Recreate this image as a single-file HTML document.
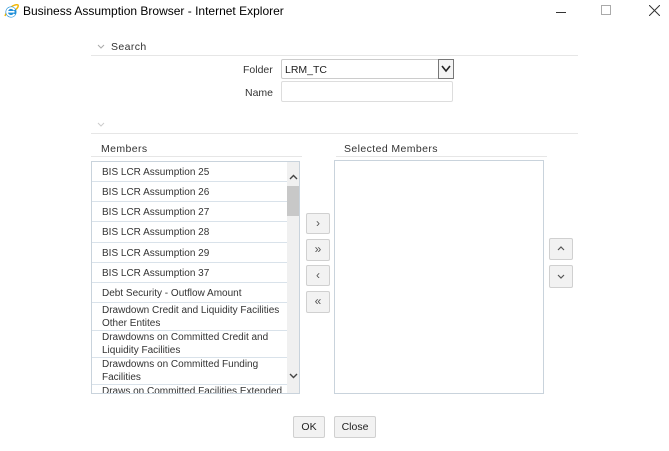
<!DOCTYPE html>
<html><head><meta charset="utf-8"><style>
*{margin:0;padding:0;box-sizing:border-box}
body{width:669px;height:451px;background:#fff;font-family:"Liberation Sans",sans-serif;font-size:11px;color:#333;position:relative;overflow:hidden}
.a{position:absolute}
.title{left:23px;top:4px;font-size:12px;color:#000}
.hr{height:1px;background:#e6e6e6}
.row{position:absolute;left:0;width:196px;border-bottom:1px solid #d9e2ea;padding-left:10px;font-size:10px;color:#333;line-height:13px;white-space:nowrap;overflow:hidden}
.btn{position:absolute;background:#f2f2f2;border:1px solid #d0d0d0;border-radius:2px;color:#555;text-align:center;font-size:12px}
</style></head><body>
<svg class="a" style="left:3px;top:3px" width="16" height="16" viewBox="0 0 16 16">
<path d="M2 13 C6 2 14 1 15 2 C16 4 13 7 9 9" fill="none" stroke="#f2b705" stroke-width="1.5"/>
<circle cx="8" cy="9" r="5.5" fill="#1e8fd9"/><rect x="4.5" y="8" width="7" height="1.6" fill="#fff"/>
<path d="M11.5 11 A4 4 0 1 1 11.5 7" fill="none" stroke="#fff" stroke-width="1.8"/>
</svg>
<div class="a title">Business Assumption Browser - Internet Explorer</div>
<div class="a" style="left:556px;top:12px;width:10px;height:1px;background:#333"></div>
<div class="a" style="left:601px;top:5px;width:10px;height:10px;border:1px solid #aaa"></div>
<svg class="a" style="left:649px;top:5px" width="11" height="11"><path d="M0 0L11 11M11 0L0 11" stroke="#333" stroke-width="1"/></svg>

<svg class="a" style="left:97px;top:44px" width="8" height="6"><path d="M1 1L4 4L7 1" fill="none" stroke="#aaa"/></svg>
<div class="a" style="left:111px;top:41px;font-size:10.5px;letter-spacing:.4px">Search</div>
<div class="a hr" style="left:91px;top:55px;width:487px"></div>
<div class="a" style="left:243px;top:64px;font-size:10.5px">Folder</div>
<div class="a" style="left:281px;top:59px;width:173px;height:20px;border:1px solid #ccc;border-radius:2px;padding:4px 0 0 3px;font-size:10.5px;color:#222">LRM_TC</div>
<div class="a" style="left:438px;top:59px;width:16px;height:20px;border:1px solid #777;background:#f4f4f4"></div>
<svg class="a" style="left:441px;top:65px" width="10" height="8"><path d="M1 1L5 6L9 1" fill="none" stroke="#222" stroke-width="1.6"/></svg>
<div class="a" style="left:245px;top:87px;font-size:10.5px">Name</div>
<div class="a" style="left:281px;top:81px;width:172px;height:21px;border:1px solid #ddd;border-radius:2px"></div>
<svg class="a" style="left:97px;top:122px" width="8" height="6"><path d="M1 1L4 4L7 1" fill="none" stroke="#ccc"/></svg>
<div class="a hr" style="left:91px;top:133px;width:487px"></div>
<div class="a" style="left:101px;top:143px;font-size:10.5px;letter-spacing:.4px">Members</div>
<div class="a hr" style="left:91px;top:156px;width:211px"></div>
<div class="a" style="left:344px;top:143px;font-size:10.5px;letter-spacing:.4px">Selected Members</div>
<div class="a hr" style="left:336px;top:156px;width:211px"></div>

<div class="a" style="left:91px;top:161px;width:209px;height:233px;border:1px solid #c9d3dc;overflow:hidden">
<div class="row" style="top:0;height:20px;padding-top:4px">BIS LCR Assumption 25</div>
<div class="row" style="top:20px;height:20px;padding-top:4px">BIS LCR Assumption 26</div>
<div class="row" style="top:40px;height:20px;padding-top:4px">BIS LCR Assumption 27</div>
<div class="row" style="top:60px;height:21px;padding-top:4px">BIS LCR Assumption 28</div>
<div class="row" style="top:81px;height:20px;padding-top:4px">BIS LCR Assumption 29</div>
<div class="row" style="top:101px;height:20px;padding-top:4px">BIS LCR Assumption 37</div>
<div class="row" style="top:121px;height:20px;padding-top:4px">Debt Security - Outflow Amount</div>
<div class="row" style="top:141px;height:28px;padding-top:1px">Drawdown Credit and Liquidity Facilities<br>Other Entites</div>
<div class="row" style="top:169px;height:27px;padding-top:0">Drawdowns on Committed Credit and<br>Liquidity Facilities</div>
<div class="row" style="top:196px;height:27px;padding-top:0">Drawdowns on Committed Funding<br>Facilities</div>
<div class="row" style="top:223px;height:20px;padding-top:0">Draws on Committed Facilities Extended</div>
<div class="a" style="left:195px;top:0;width:12px;height:231px;background:#f0f0f0"></div>
<div class="a" style="left:195px;top:24px;width:12px;height:30px;background:#c8c8c8"></div>
<svg class="a" style="left:197px;top:12px" width="9" height="6"><path d="M1 5L4.5 1.5L8 5" fill="none" stroke="#444" stroke-width="1.4"/></svg>
<svg class="a" style="left:197px;top:211px" width="9" height="6"><path d="M1 1L4.5 4.5L8 1" fill="none" stroke="#444" stroke-width="1.4"/></svg>
</div>

<div class="btn" style="left:306px;top:213px;width:24px;height:21px;line-height:18px">›</div>
<div class="btn" style="left:306px;top:239px;width:24px;height:22px;line-height:19px">»</div>
<div class="btn" style="left:306px;top:265px;width:24px;height:21px;line-height:18px">‹</div>
<div class="btn" style="left:306px;top:291px;width:24px;height:22px;line-height:19px">«</div>

<div class="a" style="left:334px;top:160px;width:210px;height:234px;border:1px solid #c9d3dc"></div>
<div class="btn" style="left:549px;top:238px;width:24px;height:22px"></div>
<svg class="a" style="left:557px;top:246px" width="8" height="5"><path d="M1 4L4 1L7 4" fill="none" stroke="#555" stroke-width="1.2"/></svg>
<div class="btn" style="left:549px;top:265px;width:24px;height:23px"></div>
<svg class="a" style="left:557px;top:274px" width="8" height="5"><path d="M1 1L4 4L7 1" fill="none" stroke="#555" stroke-width="1.2"/></svg>

<div class="btn" style="left:293px;top:416px;width:32px;height:22px;line-height:20px;font-size:10.5px;color:#222">OK</div>
<div class="btn" style="left:334px;top:416px;width:42px;height:22px;line-height:20px;font-size:10.5px;color:#222">Close</div>
</body></html>
